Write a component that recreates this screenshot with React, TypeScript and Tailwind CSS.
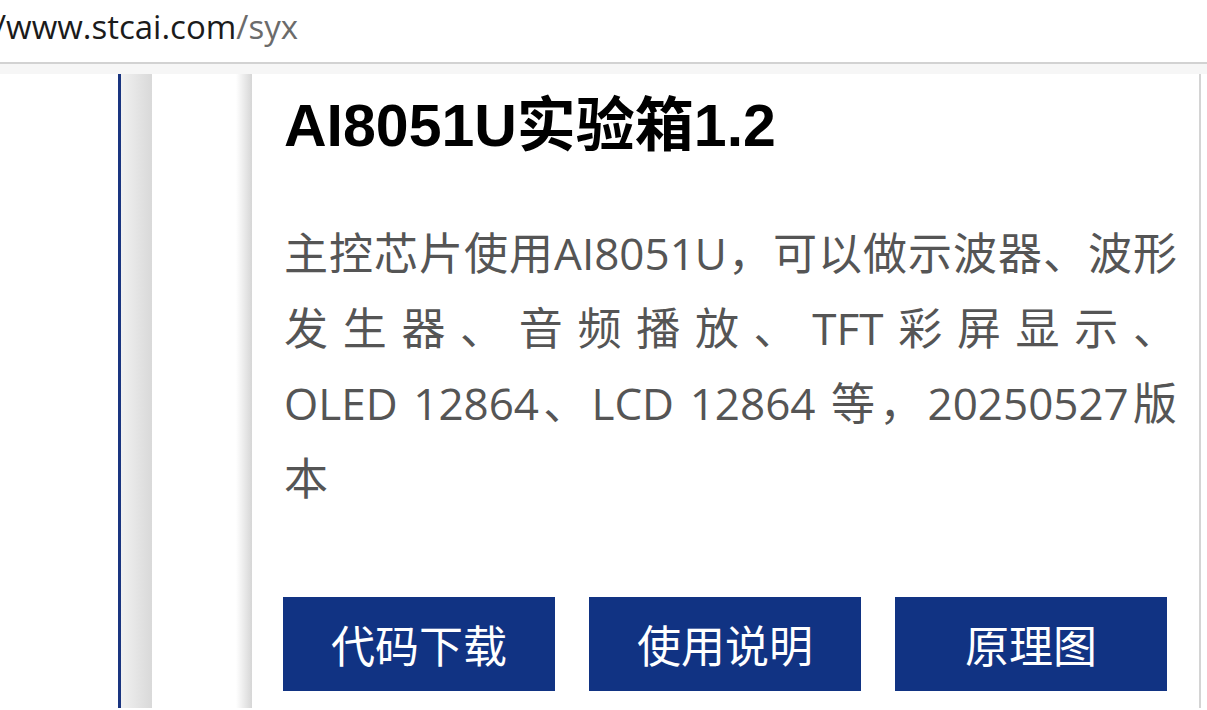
import React from "react";

const buttons = ["代码下载", "使用说明", "原理图"];

const App: React.FC = () => {
  return (
    <div
      className="h-[710px] w-[1207px] overflow-hidden bg-white"
      style={{ fontFamily: '"Open Sans", "Noto Sans CJK SC", sans-serif' }}
    >
      {/* Address bar */}
      <div className="flex h-[64px] items-start border-b-2 border-[#d2d2d2] pt-[10px]">
        <span className="-ml-[6px] text-[33px] leading-none text-[#1b1b1b]">
          /www.stcai.com<span className="text-[#6b6b6b]">/syx</span>
        </span>
      </div>
      <div className="h-[10px] bg-[#f6f6f6]" />

      {/* Page */}
      <div className="flex h-[634px]">
        <div className="w-[118px] bg-white" />
        <div className="w-[3px] bg-[#1a3580]" />
        <div className="w-[31px] bg-gradient-to-r from-[#f1f1f1] to-[#d9d9d9]" />
        <div className="w-[84px] bg-white" />
        <div className="w-[16px] bg-gradient-to-r from-white to-[#d6d6d6]" />

        {/* Card */}
        <div className="flex w-[949px] flex-col border-r-2 border-[#d4d4d4] bg-white pl-[31px] pr-[22px] pt-[12px]">
          <h1
            className="pl-[1px] text-[59px] font-bold leading-[80px] text-black"
            style={{ fontFamily: '"Liberation Sans", "Noto Sans CJK SC", sans-serif' }}
          >
            AI8051U实验箱1.2
          </h1>
          <p className="mt-[50px] pl-[1px] text-justify text-[44px] leading-[75px] text-[#555555]">
            主控芯片使用AI8051U，可以做示波器、波形发生器、音频播放、TFT彩屏显示、OLED{"\u00a0"}12864、LCD{"\u00a0"}12864 等，20250527版本
          </p>
          <div className="mt-[81px] flex gap-[34px]">
            {buttons.map((b) => (
              <button
                key={b}
                className="flex h-[94px] w-[272px] items-center justify-center bg-[#113383] text-[44px] text-white"
                style={{ fontFamily: '"Noto Sans CJK SC", sans-serif' }}
              >
                {b}
              </button>
            ))}
          </div>
        </div>
        <div className="flex-1 bg-white" />
      </div>
    </div>
  );
};

export default App;
